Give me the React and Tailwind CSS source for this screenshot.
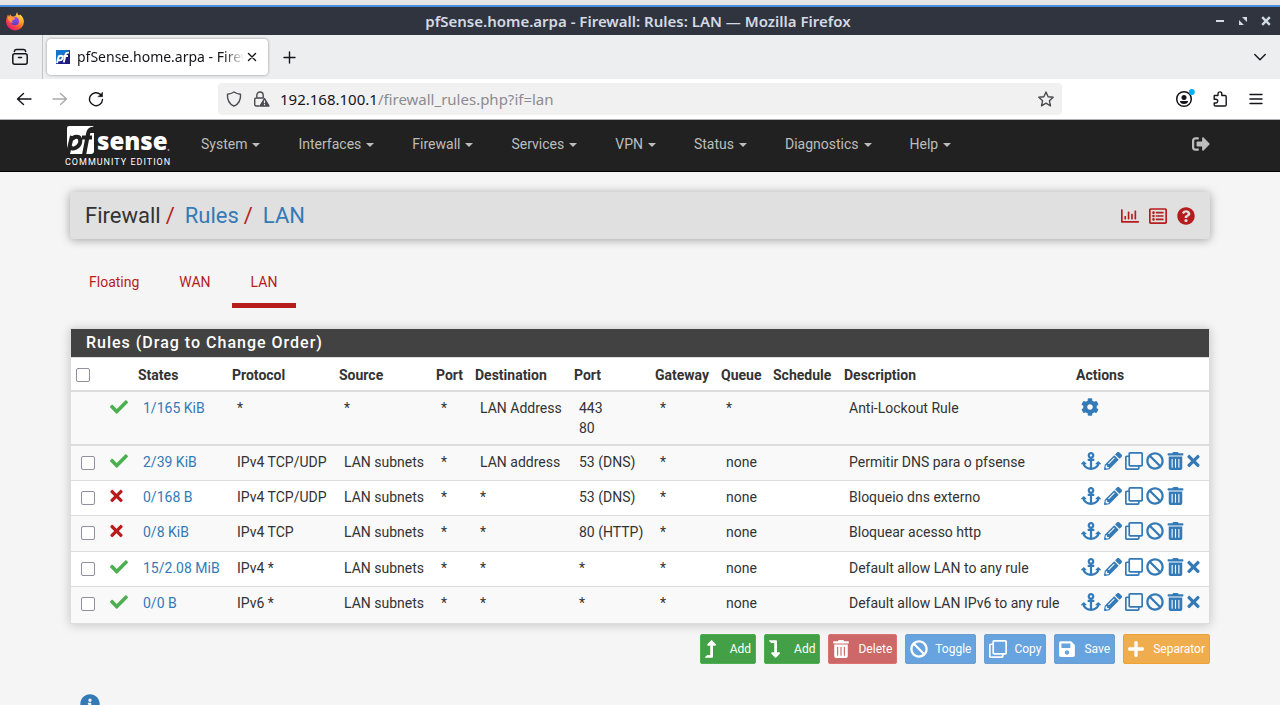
import React from "react";
import {
  FaAnchor, FaPencilAlt, FaRegClone, FaBan, FaTrashAlt, FaTimes, FaCheck, FaCog,
  FaLevelUpAlt, FaLevelDownAlt, FaSave, FaPlus, FaSignOutAlt, FaRegChartBar,
  FaRegListAlt, FaQuestionCircle, FaInfoCircle,
} from "react-icons/fa";

const UI = "font-['Noto_Sans',sans-serif]";

function FirefoxLogo() {
  return (
    <svg viewBox="0 0 20 20" className="size-5" aria-hidden="true">
      <defs>
        <linearGradient id="flame" x1="0.85" y1="0.05" x2="0.2" y2="0.95">
          <stop offset="0" stopColor="#fff044" />
          <stop offset="0.35" stopColor="#ffa42b" />
          <stop offset="0.65" stopColor="#ff5238" />
          <stop offset="1" stopColor="#e01574" />
        </linearGradient>
        <linearGradient id="globe" x1="0.5" y1="0" x2="0.5" y2="1">
          <stop offset="0" stopColor="#a04cf0" />
          <stop offset="1" stopColor="#5b3bc4" />
        </linearGradient>
      </defs>
      <path fill="url(#flame)" d="M12.4 1c-.5 1.6.4 2.6 1.6 3.5l1-.9c2.600 2 3.900 4.500 3.900 7.200a8.900 8.500 0 0 1-17.800.2C1.100 7.900 1.900 5.200 3.100 3.200c.1.900.400 1.500.900 2.100l1.300-2.100c.5 1.100 1.200 1.900 2.300 2.300 1.600.1 2.900-.5 3.400-1.500.1-1.200.500-2.200 1.400-3z" />
      <circle cx="9.800" cy="10.200" r="4.100" fill="url(#globe)" />
      <path fill="#ff9640" d="M2.800 6.200c2-.9 4.600-.8 6.300.4l1.200.9c-.6 1-1.900 1.200-2.700 1.700-.8.600-.6 1.700.2 2.300-1.300.4-2.700-.2-3.300-1.200C3.600 9.100 2.700 7.800 2.800 6.200z" />
    </svg>
  );
}

function Line({ children, box = 16, className = "size-4", width = 1.4 }) {
  return (
    <svg viewBox={`0 0 ${box} ${box}`} className={className} fill="none" stroke="currentColor" strokeWidth={width} strokeLinecap="round" strokeLinejoin="round" aria-hidden="true">
      {children}
    </svg>
  );
}

function TitleBar() {
  return (
    <div className={`grid h-7 grid-cols-[1fr_auto_1fr] items-center bg-[#2f343f] pl-[5px] pr-[9px] text-[#d3dae3] ${UI}`}>
      <FirefoxLogo />
      <h1 className="text-[15px] leading-[18px] font-semibold">pfSense.home.arpa - Firewall: Rules: LAN — Mozilla Firefox</h1>
      <div className="flex justify-end gap-[13px]">
        <button aria-label="Minimize">
          <svg viewBox="0 0 10 10" className="size-[10px]" fill="currentColor"><path d="M1 4h8v2H1z" /></svg>
        </button>
        <button aria-label="Restore">
          <svg viewBox="0 0 10 10" className="size-[10px]" fill="currentColor"><path d="M4 1h5v5zM1 4l5 5H1z" /></svg>
        </button>
        <button aria-label="Close">
          <svg viewBox="0 0 10 10" className="size-[10px]" stroke="currentColor" strokeWidth="2.4"><path d="M1.200 1.200l7.600 7.600M8.800 1.200L1.200 8.800" /></svg>
        </button>
      </div>
    </div>
  );
}

function TabStrip() {
  return (
    <div className={`flex h-11 items-center bg-[#edeef0] text-[#15141a] ${UI}`}>
      <button aria-label="Firefox View" className="flex h-full w-[43px] items-center justify-center border-r border-[#c3c4c8] pr-[2px]">
        <Line className="size-[18px]" box={18} width={1.5}>
          <rect x="1.800" y="5.800" width="14.400" height="10.400" rx="2" />
          <path d="M7.500 9.500h3M3.300 3.500Q3.800 1.600 5.500 1.600h7q1.700 0 2.200 1.900" />
        </Line>
      </button>
      <div className="ml-1 flex h-9 w-[221px] items-center rounded bg-white pl-2 pr-[10px] shadow-[0_0_3px_rgba(0,0,0,0.4)]">
        <svg viewBox="0 0 16 16" className="size-4 shrink-0" aria-hidden="true">
          <defs>
            <linearGradient id="fav" x1="0" y1="0" x2="1" y2="1">
              <stop offset="0.4" stopColor="#1475cf" />
              <stop offset="0.6" stopColor="#1e1b80" />
            </linearGradient>
          </defs>
          <path fill="url(#fav)" d="M1 1h14v14H1z" />
          <path fill="none" stroke="#fff" strokeWidth="1.900" d="M2 14L4 6.500M3.800 7.500q2-1.300 3.500-.4 1 1.600-.4 3.400-1.600 1.300-3.400.3M8.800 13.500L10.500 5.500q.5-2.200 3.500-1.800M8.500 7h4.500" />
        </svg>
        <span className="ml-[6px] w-[167px] overflow-hidden whitespace-nowrap text-[14px] text-[#15141a] [mask-image:linear-gradient(to_right,black_88%,transparent)]">
          pfSense.home.arpa - Firewall: Rules: LAN
        </span>
        <button aria-label="Close tab" className="ml-[3px] shrink-0">
          <Line className="size-[10px]" box={10}><path d="M1.500 1.500l7 7M8.500 1.500l-7 7" /></Line>
        </button>
      </div>
      <button aria-label="New tab" className="ml-[15px]">
        <Line className="size-[13px]" box={13}><path d="M6.500 1v11M1 6.500h11" /></Line>
      </button>
      <button aria-label="List all tabs" className="ml-auto mr-[14px]">
        <Line className="size-3" box={12}><path d="M.8 3.500L6 8.700l5.200-5.200" /></Line>
      </button>
    </div>
  );
}

function AddressBar() {
  return (
    <div className={`flex h-[41px] items-center border-b border-[#b0b0b4] bg-white pl-4 pr-4 text-[#15141a] ${UI}`}>
      <div className="flex w-[202px] items-center gap-5">
        <button aria-label="Back"><Line><path d="M15 8H1.500M7.500 2.500L1.500 8l6 5.500" /></Line></button>
        <button aria-label="Forward" className="text-[#a9a9ac]"><Line><path d="M1 8h13.500M8.500 2.500l6 5.500-6 5.500" /></Line></button>
        <button aria-label="Reload">
          <Line><path d="M14.500 8.500A6.500 6.500 0 1 1 12.500 3.500" /><path d="M14.500 1.500v4.200h-4.200z" fill="currentColor" strokeWidth="0.600" /></Line>
        </button>
      </div>
      <div className="flex h-8 flex-1 items-center rounded bg-[#f1f1f1] px-2 text-[#4a4a4f]">
        <Line><path d="M8 1C6 2.300 4 3 1.500 3.200c-.5 6 2 9.800 6.500 12 4.500-2.200 7-6 6.500-12C12 3 10 2.300 8 1z" /></Line>
        <svg viewBox="0 0 17 16" className="ml-[11px] h-4 w-[17px]" fill="none" stroke="currentColor" strokeWidth="1.400" aria-hidden="true">
          <path d="M3.800 7V4.500a3.200 3.500 0 0 1 6.400 0V7M6.500 15H3.200Q1.700 15 1.700 13.500v-5Q1.700 7 3.200 7h7.500" />
          <path d="M11.500 7.500L16 15H7z" fill="currentColor" strokeLinejoin="round" />
          <path d="M11.500 9.500v2.700M11.500 13v1.200" stroke="#f1f1f1" strokeWidth="1.200" />
        </svg>
        <div className="ml-[10px] text-[15px]">
          <span className="text-[#15141a]">192.168.100.1</span><span className="text-[#8b8b8f]">/firewall_rules.php?if=lan</span>
        </div>
        <button aria-label="Bookmark this page" className="ml-auto">
          <Line><path d="M8 1l2.100 4.700 5.100.5-3.800 3.500 1.100 5.100L8 12.200l-4.500 2.600 1.100-5.100L.8 6.200l5.100-.5z" /></Line>
        </button>
      </div>
      <div className="ml-[114px] flex items-center gap-5">
        <button aria-label="Account">
          <svg viewBox="0 0 16 16" className="size-4 overflow-visible" aria-hidden="true">
            <circle cx="8" cy="8" r="7.300" fill="none" stroke="currentColor" strokeWidth="1.500" />
            <circle cx="8" cy="6.500" r="2.500" fill="currentColor" />
            <path fill="currentColor" d="M4 10.100h8q0 3-4 3t-4-3z" />
            <circle cx="15.800" cy="1" r="3" fill="#00b3f4" />
          </svg>
        </button>
        <button aria-label="Extensions">
          <Line><path d="M2.200 6V5Q2.200 4.500 2.700 4.500H6V2.800a1.900 1.900 0 0 1 3.800 0V4.500h3.200q1.200 0 1.200 1.200v8.100q0 1.200-1.200 1.200H3.400q-1.200 0-1.200-1.200V12h1.600a1.800 1.800 0 0 0 0-3.800H2.200z" /></Line>
        </button>
        <button aria-label="Open application menu">
          <Line><path d="M2 3.500h12M2 8h12M2 12.500h12" /></Line>
        </button>
      </div>
    </div>
  );
}

const menus = ["System", "Interfaces", "Firewall", "Services", "VPN", "Status", "Diagnostics", "Help"];

function Logo() {
  return (
    <a href="#home" aria-label="pfSense Community Edition" className="w-[105px]">
      <svg viewBox="0 0 105 42" className="h-[42px] w-[105px] overflow-visible" aria-hidden="true">
        <path fill="#fff" d="M4 1h25q-5 2-6 7h6v18q0 3-3 3H5l1-6H2V3q0-2 2-2z" />
        <path fill="none" stroke="#212121" strokeWidth="4" d="M29.500 4.200q-5.300-1-6.300 4L19 30M17 12.500h10M2.500 30L7 11M7 14.500q1.500-3 5-2.800t3.300 4.500-4.500 6.500-5.500-1.200" />
        <text x="32" y="25" fill="#fff" fontFamily="'Open Sans', sans-serif" fontWeight="800" fontSize="24">sense</text>
        <circle cx="103.500" cy="25" r="1" fill="#999" />
        <text x="0" y="40" fill="#fff" fontFamily="Roboto, sans-serif" fontSize="9" className="tracking-[1px]">COMMUNITY EDITION</text>
      </svg>
    </a>
  );
}

function Nav() {
  return (
    <nav className="h-[52px] border-b border-black bg-[#212121]">
      <div className="mx-auto flex h-full max-w-[1170px] items-center px-[10px] pr-[15px] text-[#bdbdbd]">
        <Logo />
        <div className="ml-[31px] flex h-full flex-1 items-center justify-between pb-1">
          <div className="flex gap-[38px]">
            {menus.map((m) => (
              <button key={m} className="flex items-center gap-[5px]">
                {m}
                <svg viewBox="0 0 8 4" className="mt-[2px] h-1 w-2" fill="currentColor" aria-hidden="true"><path d="M0 0h8L4 4z" /></svg>
              </button>
            ))}
          </div>
          <a href="#logout" aria-label="Logout"><FaSignOutAlt className="size-[18px]" /></a>
        </div>
      </div>
    </nav>
  );
}

const columns = [
  ["", "w-[29px]"], ["", "w-[33px]"], ["States", "w-[94px]"], ["Protocol", "w-[107px]"], ["Source", "w-[97px]"],
  ["Port", "w-[39px]"], ["Destination", "w-[99px]"], ["Port", "w-[81px]"], ["Gateway", "w-[66px]"],
  ["Queue", "w-[52px]"], ["Schedule", "w-[71px]"], ["Description", "w-[232px]"], ["Actions", "w-[138px]"],
];

const rules = [
  { pass: true, cells: ["2/39 KiB", "IPv4 TCP/UDP", "LAN subnets", "*", "LAN address", "53 (DNS)", "*", "none", "", "Permitir DNS para o pfsense"], clear: true },
  { pass: false, cells: ["0/168 B", "IPv4 TCP/UDP", "LAN subnets", "*", "*", "53 (DNS)", "*", "none", "", "Bloqueio dns externo"] },
  { pass: false, cells: ["0/8 KiB", "IPv4 TCP", "LAN subnets", "*", "*", "80 (HTTP)", "*", "none", "", "Bloquear acesso http"] },
  { pass: true, cells: ["15/2.08 MiB", "IPv4 *", "LAN subnets", "*", "*", "*", "*", "none", "", "Default allow LAN to any rule"], clear: true },
  { pass: true, cells: ["0/0 B", "IPv6 *", "LAN subnets", "*", "*", "*", "*", "none", "", "Default allow LAN IPv6 to any rule"], clear: true },
];

const lockout = ["1/165 KiB", "*", "*", "*", "LAN Address", "443\n80", "*", "*", "", "Anti-Lockout Rule"];

const box = "block size-[14px] appearance-none rounded-[2px] border border-[#8f8f9d] bg-white checked:bg-[#337ab7]";

function Cells({ values }) {
  return values.map((v, i) => (
    <td key={i} className="whitespace-pre pl-[10px] pt-[6px]">
      {i === 0 ? <a href="#states" className="text-[#337ab7]">{v}</a> : v}
    </td>
  ));
}

function Status({ pass }) {
  return (
    <td className="pl-[10px] pt-[6px]">
      {pass ? <FaCheck className="size-[18px] text-[#4caf50]" aria-label="Pass" /> : <FaTimes className="h-[18px] w-[13px] text-[#b71c1c]" aria-label="Block" />}
    </td>
  );
}

function Actions({ clear }) {
  const items = [
    ["Anchor", FaAnchor, "h-[18px] w-5"],
    ["Edit", FaPencilAlt, "size-[18px]"],
    ["Copy", FaRegClone, "size-[18px]"],
    ["Disable", FaBan, "size-[18px]"],
    ["Delete", FaTrashAlt, "h-[18px] w-[17px]"],
  ];
  if (clear) items.push(["Clear states", FaTimes, "h-[18px] w-[13px]"]);
  return (
    <div className="flex gap-[3px] text-[#337ab7]">
      {items.map(([label, Icon, size]) => (
        <a key={label} href="#rule" aria-label={label}><Icon className={size} /></a>
      ))}
    </div>
  );
}

function Rules() {
  return (
    <section className="mt-5 border border-[#ddd] bg-white shadow-[0_1px_10px_rgba(0,0,0,0.2)]">
      <h2 className="h-7 bg-[#424242] pl-[15px] text-[16px] leading-[27px] font-medium tracking-[1px] text-white">Rules (Drag to Change Order)</h2>
      <table className="w-full table-fixed border-t border-[#ddd] text-left">
        <colgroup>{columns.map(([, w], i) => <col key={i} className={w} />)}</colgroup>
        <thead>
          <tr className="h-[33px] border-b-2 border-[#ddd]">
            {columns.map(([name], i) => (
              <th key={i} className="pl-[5px] pt-[2px] font-bold">
                {i === 0 ? <input type="checkbox" aria-label="Select all rules" className={box} /> : name}
              </th>
            ))}
          </tr>
        </thead>
        <tbody className="align-top">
          <tr className="h-[54px] border-b-2 border-[#ddd] bg-[#f9f9f9]">
            <td />
            <Status pass />
            <Cells values={lockout} />
            <td className="pl-[10px] pt-[6px]"><a href="#admin" aria-label="Settings" className="text-[#337ab7]"><FaCog className="size-[18px]" /></a></td>
          </tr>
        </tbody>
        <tbody className="align-top">
          {rules.map((r) => (
            <tr key={r.cells[0]} className="h-[35px] border-b border-[#ddd] last:border-0 odd:h-9 odd:bg-[#f9f9f9]">
              <td className="pl-[10px] pt-[10px]"><input type="checkbox" aria-label={`Select rule ${r.cells[9]}`} className={box} /></td>
              <Status pass={r.pass} />
              <Cells values={r.cells} />
              <td className="pl-[10px] pt-[6px]"><Actions clear={r.clear} /></td>
            </tr>
          ))}
        </tbody>
      </table>
    </section>
  );
}

const buttons = [
  ["Add", FaLevelUpAlt, "h-[18px] w-[11px]", "border-[#4caf50] bg-[#43a047]"],
  ["Add", FaLevelDownAlt, "h-[18px] w-[11px]", "border-[#4caf50] bg-[#43a047]"],
  ["Delete", FaTrashAlt, "h-[18px] w-4", "border-[#dd7370] bg-[#cc6868]"],
  ["Toggle", FaBan, "size-[18px]", "border-[#6c9fcf] bg-[#67a3df]"],
  ["Copy", FaRegClone, "size-[18px]", "border-[#6c9fcf] bg-[#67a3df]"],
  ["Save", FaSave, "h-[18px] w-4", "border-[#6c9fcf] bg-[#67a3df]"],
  ["Separator", FaPlus, "h-[18px] w-4", "border-[#eea236] bg-[#f0ad4e]"],
];

export default function App() {
  return (
    <div className="h-screen overflow-hidden bg-[#f5f5f5] font-[Roboto,sans-serif] text-[14px] leading-5 text-[#333]">
      <div className="h-[7px] border-b-2 border-[#4a90e2] bg-[#e6e6e6]" />
      <TitleBar />
      <TabStrip />
      <AddressBar />
      <Nav />
      <main className="mx-auto max-w-[1170px] px-[15px] pt-5">
        <header className="flex h-[47px] items-center justify-between rounded-sm bg-[#e0e0e0] px-[15px] shadow-[0_1px_10px_rgba(0,0,0,0.35)]">
          <div className="flex text-[22px]">
            <span>Firewall</span>
            <span className="ml-[5px] mr-[10px] text-[#b71c1c]">/</span>
            <a href="#rules" className="text-[#337ab7]">Rules</a>
            <span className="ml-[5px] mr-[10px] text-[#b71c1c]">/</span>
            <a href="#lan" className="text-[#337ab7]">LAN</a>
          </div>
          <div className="flex gap-[10px] text-[#b71c1c]">
            <a href="#status" aria-label="Related status"><FaRegChartBar className="size-[18px]" /></a>
            <a href="#logs" aria-label="Related log entries"><FaRegListAlt className="size-[18px]" /></a>
            <a href="#help" aria-label="Help"><FaQuestionCircle className="size-[18px]" /></a>
          </div>
        </header>
        <div className="mt-5 flex gap-[2px] text-[#b71c1c]">
          {["Floating", "WAN", "LAN"].map((t) => (
            <a key={t} href={`#${t.toLowerCase()}`} className={`border-b-5 px-[19px] pb-[11px] pt-[13px] ${t === "LAN" ? "border-[#b71c1c]" : "border-transparent"}`}>{t}</a>
          ))}
        </div>
        <Rules />
        <div className="mt-[10px] flex justify-end gap-2 text-[12px] text-white">
          {buttons.map(([label, Icon, size, color], i) => (
            <button key={i} className={`flex h-[30px] items-center rounded-[2px] border px-1 ${color}`}>
              <span className="mr-[7px] flex w-[18px]"><Icon className={size} /></span>
              {label}
            </button>
          ))}
        </div>
        <button aria-label="Show information" className="ml-[10px] mt-[30px] block text-[#337ab7]"><FaInfoCircle className="size-5" /></button>
      </main>
    </div>
  );
}
